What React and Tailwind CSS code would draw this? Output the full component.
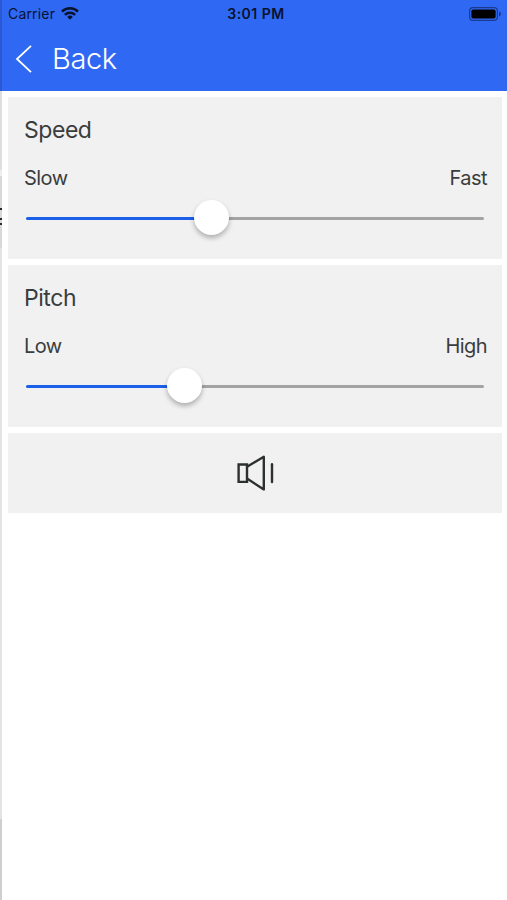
import { useState } from 'react'

function WifiIcon() {
  return (
    <svg width="18" height="13" viewBox="0 0 18 13" fill="none" stroke="#0a1230" strokeWidth="2.5">
      <path d="M1 4.6a11.4 11.4 0 0 1 16 0" />
      <path d="M3.9 7.8a7.3 7.3 0 0 1 10.2 0" />
      <path d="M9 12.8 6.2 9.9a4 4 0 0 1 5.6 0z" fill="#0a1230" stroke="none" />
    </svg>
  )
}

function BatteryIcon() {
  return (
    <svg width="33" height="14" viewBox="0 0 33 14" fill="none">
      <rect x="0.6" y="0.6" width="27.8" height="12.8" rx="3.4" stroke="#1c3a8c" strokeWidth="1.2" />
      <rect x="2.4" y="2.4" width="24.2" height="9.2" rx="1.8" fill="#000" />
      <path d="M30 4.6c1.3.5 1.9 1.3 1.9 2.4s-.6 1.9-1.9 2.4z" fill="#1c3a8c" />
    </svg>
  )
}

function StatusBar() {
  return (
    <div className="grid h-[27px] grid-cols-3 items-center pl-[6px] pr-[5px] text-[14px] text-[#0a1230]">
      <div className="flex items-center gap-[6px]">
        <span className="tracking-[0.17px]">Carrier</span>
        <WifiIcon />
      </div>
      <span className="pl-[2px] text-center font-semibold tracking-[0.5px]">3:01 PM</span>
      <div className="flex justify-end">
        <BatteryIcon />
      </div>
    </div>
  )
}

function SliderCard({ title, minLabel, maxLabel, value, onChange }) {
  return (
    <section className="h-[162px] bg-[#f1f1f1] px-4 pt-[18px] text-[#3a3d3e]">
      <h2 className="text-[23px] leading-[30px] tracking-[-0.45px]">{title}</h2>
      <div className="-mr-px mt-[20px] flex justify-between text-[20px] leading-[26px] tracking-[-0.55px]">
        <span>{minLabel}</span>
        <span>{maxLabel}</span>
      </div>
      <div className="relative mx-[2px] mt-[9px] flex h-[36px] items-center">
        <div className="h-[3px] rounded-l-full bg-[#1c5fe8]" style={{ width: `${value}%` }} />
        <div className="z-10 -mx-[17.5px] mb-px size-[35px] shrink-0 rounded-full bg-white shadow-[0_3px_5px_rgba(0,0,0,0.28)]" />
        <div className="h-[3px] flex-1 rounded-r-full bg-[#a3a3a3]" />
        <input
          type="range"
          min="0"
          max="100"
          step="0.1"
          aria-label={title}
          value={value}
          onChange={(event) => onChange(Number(event.target.value))}
          className="absolute inset-0 z-20 w-full cursor-pointer opacity-0"
        />
      </div>
    </section>
  )
}

export default function App() {
  const [speed, setSpeed] = useState(40.5)
  const [pitch, setPitch] = useState(34.5)

  return (
    <div className="flex h-[900px] w-[507px] overflow-hidden bg-white font-['Inter','Liberation_Sans',sans-serif]">
      {/* edge of the screen underneath */}
      <div className="flex w-[2px] shrink-0 flex-col bg-[#e2e2e2]">
        <div className="h-[91px] bg-[#2a59d3]" />
        <div className="h-[79px] bg-[#dedede]" />
        <div className="h-[6px] bg-[#eeeeee]" />
        <div className="flex h-[72px] flex-col bg-[#d8d8d8] pt-[32px]">
          <div className="h-[2px] bg-[#2b2b2b]" />
          <div className="mt-[8px] h-[2px] bg-[#2b2b2b]" />
          <div className="mt-[3px] h-[2px] bg-[#2b2b2b]" />
        </div>
        <div className="h-[571px] bg-[#e4e4e4]" />
        <div className="flex-1 bg-[#cfcfcf]" />
      </div>

      <main className="flex-1">
        <header className="h-[91px] bg-[#2f69f3]">
          <StatusBar />
          <button type="button" className="flex h-[64px] items-center pl-[13px] text-[29px] font-light text-white">
            <svg width="18" height="30" viewBox="0 0 18 30" fill="none" stroke="currentColor" strokeWidth="1.8">
              <path d="M16 1.8 2 15l14 13.2" />
            </svg>
            <span className="ml-[19px] tracking-[-0.4px]">Back</span>
          </button>
        </header>

        <div className="flex flex-col gap-[6px] pl-[6px] pr-[5px] pt-[6px]">
          <SliderCard title="Speed" minLabel="Slow" maxLabel="Fast" value={speed} onChange={setSpeed} />
          <SliderCard title="Pitch" minLabel="Low" maxLabel="High" value={pitch} onChange={setPitch} />
          <button type="button" aria-label="Play sample" className="flex h-[80px] items-center justify-center bg-[#f1f1f1] pl-[2px]">
            <svg width="38" height="36" viewBox="0 0 38 36" fill="none" stroke="#2d3030" strokeWidth="2.4">
              <path d="M1.6 9.5h8.4v17.4H1.6z" />
              <path d="M10 11.8 26.8 1.8v32.6L10 23.6" strokeLinejoin="round" />
              <path d="M35 9.2v17.8" strokeLinecap="round" />
            </svg>
          </button>
        </div>
      </main>
    </div>
  )
}
